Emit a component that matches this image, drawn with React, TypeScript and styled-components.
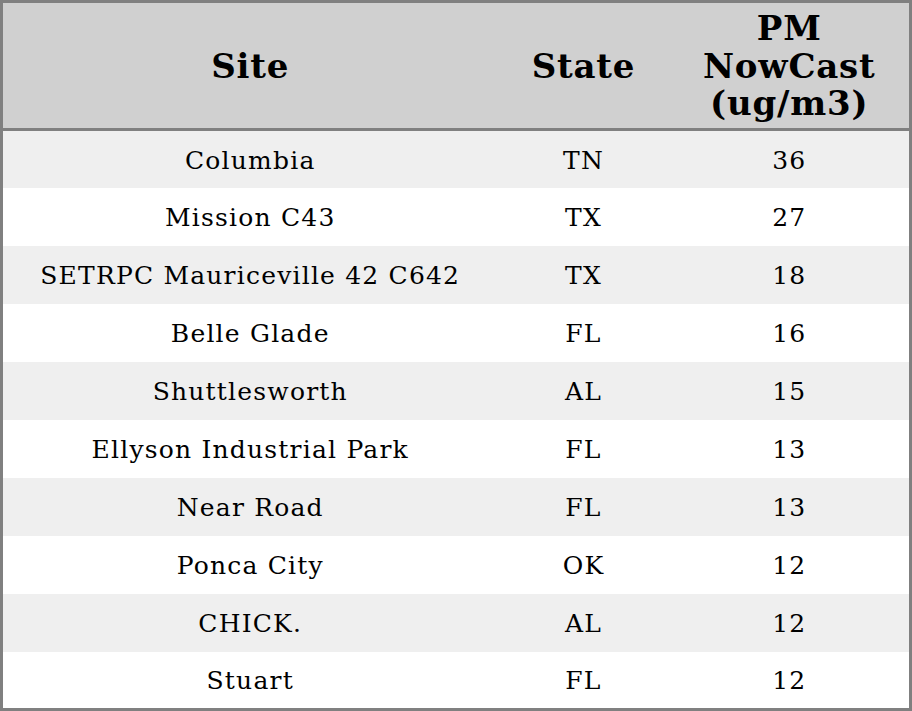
import { createGlobalStyle, styled } from "styled-components";

type TSiteRow = {
  site: string;
  state: string;
  pm: number;
};

const rows: TSiteRow[] = [
  { site: "Columbia", state: "TN", pm: 36 },
  { site: "Mission C43", state: "TX", pm: 27 },
  { site: "SETRPC Mauriceville 42 C642", state: "TX", pm: 18 },
  { site: "Belle Glade", state: "FL", pm: 16 },
  { site: "Shuttlesworth", state: "AL", pm: 15 },
  { site: "Ellyson Industrial Park", state: "FL", pm: 13 },
  { site: "Near Road", state: "FL", pm: 13 },
  { site: "Ponca City", state: "OK", pm: 12 },
  { site: "CHICK.", state: "AL", pm: 12 },
  { site: "Stuart", state: "FL", pm: 12 },
];

const GlobalStyle = createGlobalStyle`
  html, body {
    margin: 0;
    padding: 0;
    background: #ffffff;
  }
  body {
    font-family: "DejaVu Serif", "Liberation Serif", serif;
  }
`;

export default function App() {
  return (
    <>
      <GlobalStyle />
      <Table>
        <colgroup>
          <col style={{ width: 496 }} />
          <col style={{ width: 172 }} />
          <col />
        </colgroup>
        <thead>
          <HeadRow>
            <HeadCell>Site</HeadCell>
            <HeadCell>State</HeadCell>
            <HeadCell>
              PM
              <br />
              NowCast
              <br />
              (ug/m3)
            </HeadCell>
          </HeadRow>
        </thead>
        <tbody>
          {rows.map((row, i) => (
            <BodyRow key={row.site} $striped={i % 2 === 0}>
              <Cell>{row.site}</Cell>
              <Cell>{row.state}</Cell>
              <Cell>{row.pm}</Cell>
            </BodyRow>
          ))}
        </tbody>
      </Table>
    </>
  );
}

const Table = styled.table`
  width: 912px;
  height: 711px;
  box-sizing: border-box;
  border-collapse: collapse;
  table-layout: fixed;
  border: 3px solid #808080;
  color: #000;
`;

const HeadRow = styled.tr`
  height: 128px;
  background-color: #d0d0d0;
  border-bottom: 3px solid #808080;
`;

const HeadCell = styled.th`
  padding: 2px 0 0;
  font-size: 34px;
  font-weight: 700;
  line-height: 37.5px;
  letter-spacing: 0.8px;
  text-align: center;
  vertical-align: middle;
`;

const BodyRow = styled.tr<{ $striped: boolean }>`
  height: 57.7px;
  background-color: ${({ $striped }) => ($striped ? "#efefef" : "#ffffff")};
`;

const Cell = styled.td`
  padding: 2px 0 0;
  font-size: 25px;
  letter-spacing: 1.2px;
  text-align: center;
  vertical-align: middle;
`;
